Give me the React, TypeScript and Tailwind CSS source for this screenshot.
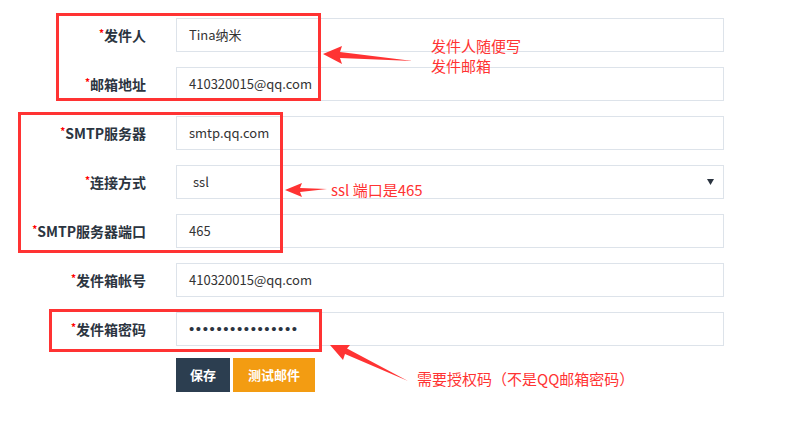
import React from 'react';

const rows: { label: string; value: string; type?: 'select' | 'password' }[] = [
  { label: '发件人', value: 'Tina纳米' },
  { label: '邮箱地址', value: '410320015@qq.com' },
  { label: 'SMTP服务器', value: 'smtp.qq.com' },
  { label: '连接方式', value: 'ssl', type: 'select' },
  { label: 'SMTP服务器端口', value: '465' },
  { label: '发件箱帐号', value: '410320015@qq.com' },
  { label: '发件箱密码', value: '••••••••••••••••', type: 'password' },
];

const font = { fontFamily: '"Noto Sans CJK SC", "Noto Sans", sans-serif' };

export default function App() {
  return (
    <div className="relative w-[807px] h-[437px] bg-white text-[#333]" style={font}>
      <div className="flex flex-col gap-[15px] pt-[18px]">
        {rows.map((r) => (
          <div key={r.label} className="flex items-center h-[34px]">
            <div className="w-[146px] text-right text-[14px] font-bold text-[#2b3440] whitespace-nowrap">
              <span className="text-[#f00] text-[10px] align-top">*</span>
              {r.label}
            </div>
            <div className="ml-[30px] w-[548px] h-[34px] border border-[#dde3ea] flex items-center justify-between px-[12px] text-[13px] text-[#333]">
              {r.type === 'password' ? (
                <span className="font-['Liberation_Sans'] text-[15px] tracking-[1.6px] text-[#2b3440]">{r.value}</span>
              ) : (
                <span className={r.type === 'select' ? 'pl-[4px]' : ''}>{r.value}</span>
              )}
              {r.type === 'select' && (
                <svg width="7" height="6" viewBox="0 0 7 6" className="mr-[-3px]">
                  <polygon points="0,0 7,0 3.5,6" fill="#2b3440" />
                </svg>
              )}
            </div>
          </div>
        ))}
        <div className="flex gap-[3px] ml-[176px] mt-[-3px]">
          <button className="w-[54px] h-[34px] bg-[#2c3e50] text-white text-[13px] font-bold">保存</button>
          <button className="w-[82px] h-[34px] bg-[#f39c12] text-white text-[13px] font-bold">测试邮件</button>
        </div>
      </div>

      {/* annotations */}
      <div className="absolute left-[56px] top-[13px] w-[265px] h-[88px] border-[3px] border-[#f33]" />
      <div className="absolute left-[18px] top-[112px] w-[265px] h-[141px] border-[3px] border-[#f33]" />
      <div className="absolute left-[49px] top-[309px] w-[273px] h-[43px] border-[3px] border-[#f33]" />

      <svg className="absolute left-0 top-0" width="807" height="437">
        <polygon points="323,54 342,46 340,52 413,61 340,58 342,64" fill="#f33" />
        <polygon points="285,190 302,183 300,188 327,189 300,192 302,197" fill="#f33" />
        <polygon points="330,345 350,345 347,348.5 408,381 345,354 343,360" fill="#f33" />
      </svg>

      <div className="absolute left-[431px] top-[36px] text-[15px] leading-[20px] text-[#f33]">
        <div>发件人随便写</div>
        <div>发件邮箱</div>
      </div>
      <div className="absolute left-[331px] top-[179px] text-[15px] leading-[22px] text-[#f33]">ssl 端口是465</div>
      <div className="absolute left-[417px] top-[368px] text-[15px] leading-[22px] text-[#f33]">需要授权码（不是QQ邮箱密码）</div>
    </div>
  );
}
